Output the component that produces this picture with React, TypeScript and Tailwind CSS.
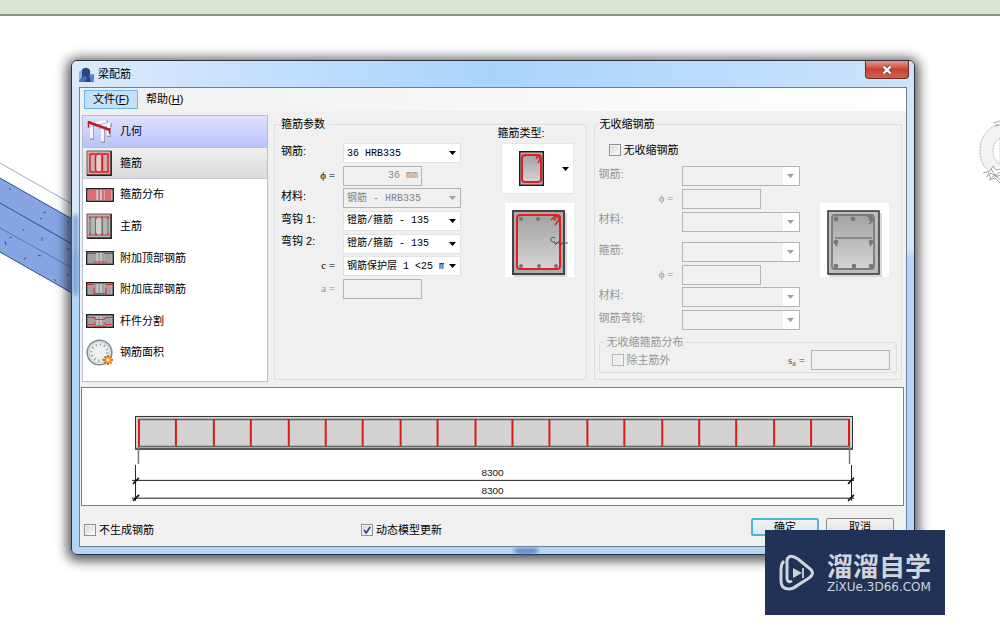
import type { ReactNode } from "react"

const bars = Array.from({ length: 20 }, (_, i) => 57 + Math.round(i * 37.4))

function SelectBox({ id, value, disabled, blank }: { id: string; value?: string; disabled?: boolean; blank?: boolean }) {
  return (
    <div className="grid w-[118px] items-center">
      <select
        id={id}
        disabled={disabled}
        className={`col-start-1 row-start-1 h-5 w-full appearance-none overflow-hidden border pr-4 pl-[3px] font-['Liberation_Mono','Noto_Sans_CJK_SC',monospace] text-[10px] text-clip whitespace-nowrap ${
          disabled ? "border-[#b4b4b4] bg-[#f0f0f0] text-[#838383] opacity-100" : "border-[#e3e3e3] bg-white text-black"
        }`}
      >
        <option>{value}</option>
      </select>
      <span
        className={`pointer-events-none col-start-1 row-start-1 mr-px flex h-[18px] w-4 items-center justify-center justify-self-end ${
          blank ? "bg-white" : ""
        }`}
      >
        <svg width="7" height="4" viewBox="0 0 7 4" className={disabled ? "text-[#a0a0a0]" : "text-black"}>
          <path d="M0 0h7L3.5 4z" fill="currentColor" />
        </svg>
      </span>
    </div>
  )
}

function TextBox({ id, value, disabled }: { id: string; value?: string; disabled?: boolean }) {
  return (
    <input
      id={id}
      type="text"
      defaultValue={value}
      disabled={disabled}
      className="h-5 w-[79px] border border-[#b4b4b4] bg-[#f0f0f0] px-[3px] text-right font-['Liberation_Mono','Noto_Sans_CJK_SC',monospace] text-[10px] text-[#8a8a8a]"
    />
  )
}

function CheckBox({ label, checked, disabled }: { label: string; checked?: boolean; disabled?: boolean }) {
  return (
    <label className={`flex items-center gap-[3px] ${disabled ? "text-[#969696]" : "text-black"}`}>
      <span className="grid">
        <input
          type="checkbox"
          defaultChecked={checked}
          disabled={disabled}
          className="peer col-start-1 row-start-1 h-3 w-3 appearance-none border border-[#8e8f8f] bg-linear-to-br from-[#cfd2d6] to-white shadow-[inset_0_0_0_1px_#f4f4f4] disabled:border-[#b5b5b5] disabled:bg-none"
        />
        <svg
          viewBox="0 0 12 12"
          className="pointer-events-none invisible col-start-1 row-start-1 h-3 w-3 peer-checked:visible"
        >
          <path d="M3 6l2.2 3L9.3 2.8" fill="none" stroke="#33499b" strokeWidth="1.8" />
        </svg>
      </span>
      {label}
    </label>
  )
}

function Row({ id, label, symbol, dim, children }: { id: string; label: string; symbol?: boolean; dim?: boolean; children: ReactNode }) {
  return (
    <div className="flex items-center">
      <label
        htmlFor={id}
        className={`flex-1 ${symbol ? "pr-2 pb-px text-right font-['Liberation_Serif','Noto_Sans_CJK_SC',serif]" : "pb-1"} ${
          dim ? "text-[#969696]" : "text-black"
        }`}
      >
        {label}
      </label>
      {children}
    </div>
  )
}

function GeometryIcon() {
  return (
    <svg width="28" height="26" viewBox="0 0 28 26">
      <g fill="none" strokeLinecap="square">
        <path d="M6 9v11M17 12v11M23 9v8M6 7l14-3M14 9l10-2" stroke="#9b9bab" strokeWidth="3.800" />
        <path d="M5.500 8v11M16.500 11v11M22.500 7v9M5 6.500l14-3M13 9l10-3" stroke="#f6f6f6" strokeWidth="3" />
        <path d="M2 4l22 8" stroke="#c51422" strokeWidth="2.600" strokeLinecap="butt" />
        <path d="M2.500 4v5M23.500 11v4" stroke="#c51422" strokeWidth="1.400" />
      </g>
    </svg>
  )
}

function SectionIcon({ main }: { main?: boolean }) {
  return (
    <svg width="26" height="26" viewBox="0 0 26 26">
      <rect x="1" y="1" width="24" height="24" fill={main ? "#b4b4b0" : "#cfaeab"} stroke="#6a5c5c" />
      <path d="M25.200 1v24.200H1" fill="none" stroke="#222" strokeWidth="1.400" />
      <g fill="none" stroke={main ? "#716f6d" : "#cf1b25"} strokeWidth={main ? "1" : "1.400"}>
        <path d="M5 4h4q1 1 1 3v12q0 2-1 3H5q-1-1-1-3V7q0-2 1-3z" />
        <path d="M10.500 4h5q1 1 1 3v12q0 2-1 3h-5q-1-1-1-3V7q0-2 1-3z" fill={main ? "#cfcfcb" : "#e3cfcc"} />
        <path d="M17 4h4q1 1 1 3v12q0 2-1 3h-4q-1-1-1-3V7q0-2 1-3z" />
      </g>
      <g fill="#ee3340">
        {[4, 10, 16, 22].map((x) => (
          <g key={x}>
            <circle cx={x} cy="4.500" r="1.300" />
            <circle cx={x} cy="21.500" r="1.300" />
          </g>
        ))}
      </g>
    </svg>
  )
}

function SpanIcon({ kind }: { kind: "spread" | "top" | "bottom" | "split" }) {
  const red = kind === "spread"
  return (
    <svg width="28" height="14" viewBox="0 0 28 14">
      <rect x="0.7" y="0.7" width="26.600" height="12.600" fill={red ? "#d9a7a7" : "#b3afaf"} stroke="#1d1818" strokeWidth="1.300" />
      <path
        d="M3 2v10M5 2v10M7 2v10M9 2v10M13 2v10M17 2v10M20 2v10M22 2v10M24 2v10"
        stroke={red ? "#dc3542" : "#969191"}
        strokeWidth="1"
      />
      <path d="M11.500 2v10M15 2v10" stroke="#c3caca" strokeWidth="1.500" />
      <g fill="none" stroke="#e22f3e" strokeWidth="1.200">
        {kind === "top" && <path d="M1.500 2.500H10M18 2.500h8.500M7 11h14" />}
        {kind === "bottom" && <path d="M1.500 2.500H8M20 2.500h6.500M7 11.500h14M8 11V6M20 11V6" />}
        {kind === "split" && <path d="M1.500 3.500H8l2 2h8l2-2h6.500M2 10.500h6l2-2M26 10.500h-6l-2-2M8 12h12" />}
      </g>
    </svg>
  )
}

function AreaIcon() {
  return (
    <svg width="28" height="28" viewBox="0 0 28 28">
      <circle cx="13.500" cy="13.500" r="12.300" fill="#eceef0" stroke="#858b90" strokeWidth="1.600" />
      <circle cx="13.500" cy="13.500" r="10.500" fill="none" stroke="#c9cdd0" />
      <circle cx="13.500" cy="13.500" r="8" fill="none" stroke="#8397ab" strokeWidth="2.200" strokeDasharray="1.200 3" />
      <path d="M22 16v10M17 21h10M18.500 17.500l7 7M25.500 17.500l-7 7" stroke="#e06a17" strokeWidth="2" />
      <circle cx="22" cy="21" r="3.300" fill="#f28a1c" />
      <circle cx="22" cy="21" r="1.800" fill="#fff3a8" />
    </svg>
  )
}

const items = [
  { label: "几何", icon: <GeometryIcon />, style: "bg-linear-to-b from-[#dfe0fb] to-[#b9c3fb] border-[#b9bddc]" },
  { label: "箍筋", icon: <SectionIcon />, style: "bg-linear-to-b from-[#efefef] to-[#dadada] border-[#c9c9d8]" },
  { label: "箍筋分布", icon: <SpanIcon kind="spread" />, style: "border-transparent" },
  { label: "主筋", icon: <SectionIcon main />, style: "border-transparent" },
  { label: "附加顶部钢筋", icon: <SpanIcon kind="top" />, style: "border-transparent" },
  { label: "附加底部钢筋", icon: <SpanIcon kind="bottom" />, style: "border-transparent" },
  { label: "杆件分割", icon: <SpanIcon kind="split" />, style: "border-transparent" },
  { label: "钢筋面积", icon: <AreaIcon />, style: "border-transparent" },
]

function StirrupPreview() {
  return (
    <svg width="69" height="74" viewBox="0 0 69 74" className="bg-white">
      <defs>
        <linearGradient id="concrete" x1="0" y1="0" x2="0" y2="1">
          <stop offset="0" stopColor="#a3a3a3" />
          <stop offset="1" stopColor="#d4d4d4" />
        </linearGradient>
      </defs>
      <rect x="9" y="10" width="53" height="64" fill="#000" opacity="0.15" />
      <rect x="8" y="8" width="51" height="63" fill="#aeaaae" stroke="#49424a" strokeWidth="2" />
      <rect x="12" y="12" width="43" height="54" rx="3" fill="url(#concrete)" stroke="#e0201b" strokeWidth="2" />
      <g fill="#777">
        <circle cx="16" cy="16" r="2" />
        <circle cx="33" cy="16" r="2" />
        <circle cx="50" cy="16" r="2" />
        <circle cx="16" cy="63" r="2" />
        <circle cx="34" cy="63" r="2" />
        <circle cx="51" cy="63" r="2" />
      </g>
      <path d="M46 17l4-4q4 0 4 4l-4 5" fill="none" stroke="#e0201b" strokeWidth="1.500" />
      <path d="M50 35q-4-2-4 1.500t4 2M49 40h14M50 42l4-4M56 42l4-4" fill="none" stroke="#555" />
    </svg>
  )
}

function ShrinkagePreview() {
  return (
    <svg width="69" height="74" viewBox="0 0 69 74" className="bg-white">
      <rect x="9" y="10" width="53" height="64" fill="#000" opacity="0.15" />
      <rect x="8" y="8" width="51" height="63" fill="#bdbdbd" stroke="#333" strokeWidth="1.500" />
      <rect x="12" y="12" width="42" height="54" rx="3" fill="url(#concrete)" stroke="#7b7b7b" strokeWidth="1.800" />
      <path d="M15 35h37" stroke="#777" strokeWidth="1.500" />
      <path d="M14 38l3 5M53 38l-3 5M47 14l4-1 2 4-4 4" fill="none" stroke="#777" strokeWidth="1.500" />
      <g fill="#777">
        <circle cx="16" cy="16" r="2.300" />
        <circle cx="33" cy="16" r="2.300" />
        <circle cx="51" cy="16" r="2.300" />
        <circle cx="16" cy="39" r="2.300" />
        <circle cx="51" cy="39" r="2.300" />
        <circle cx="16" cy="63" r="2.300" />
        <circle cx="34" cy="63" r="2.300" />
        <circle cx="51" cy="63" r="2.300" />
      </g>
    </svg>
  )
}

function StirrupParameters() {
  return (
    <fieldset className="min-w-0 flex-1 rounded-xs border border-[#dcdfe2] px-[6px]">
      <legend className="h-3 pr-1 leading-3">箍筋参数</legend>
      <div className="flex justify-between">
        <div className="mt-3 grid h-[158px] w-[180px] grid-rows-7">
          <Row id="bar" label="钢筋:">
            <SelectBox id="bar" value="36 HRB335" />
          </Row>
          <Row id="phi" label="ϕ =" symbol>
            <div className="w-[118px]">
              <TextBox id="phi" value="36 mm" disabled />
            </div>
          </Row>
          <Row id="material" label="材料:">
            <SelectBox id="material" value="钢筋 - HRB335" disabled />
          </Row>
          <Row id="hook1" label="弯钩 1:">
            <SelectBox id="hook1" value="镫筋/箍筋 - 135" />
          </Row>
          <Row id="hook2" label="弯钩 2:">
            <SelectBox id="hook2" value="镫筋/箍筋 - 135" />
          </Row>
          <Row id="cover" label="c =" symbol>
            <SelectBox id="cover" value="钢筋保护层 1 <25 mm>" />
          </Row>
          <Row id="offset" label="a =" symbol dim>
            <div className="w-[118px]">
              <TextBox id="offset" disabled />
            </div>
          </Row>
        </div>
        <div className="-mt-[3px] flex flex-col items-end pr-[6px]">
          <div className="mb-1 w-[76px] leading-3">箍筋类型:</div>
          <button
            aria-label="箍筋类型"
            className="mb-[9px] flex h-[51px] w-[73px] items-center gap-[18px] border border-[#e6e6e6] bg-white pl-[17px]"
          >
            <svg width="25" height="35" viewBox="0 0 25 35">
              <rect x="0.7" y="0.7" width="23.600" height="33.600" fill="#b3adad" stroke="#241a1a" strokeWidth="1.400" />
              <rect x="3" y="4" width="19" height="27" rx="3" fill="url(#concrete)" stroke="#e0201b" strokeWidth="2" />
              <path d="M17 8l2-3q3 1 2 3l-2 4" fill="none" stroke="#e0201b" strokeWidth="1.500" />
            </svg>
            <svg width="7" height="4" viewBox="0 0 7 4">
              <path d="M0 0h7L3.500 4z" />
            </svg>
          </button>
          <StirrupPreview />
        </div>
      </div>
    </fieldset>
  )
}

function ShrinkageReinforcement() {
  return (
    <fieldset className="min-w-0 flex-1 rounded-xs border border-[#dcdfe2] px-1">
      <legend className="h-3 px-px leading-3">无收缩钢筋</legend>
      <div className="flex justify-between">
        <div className="w-[201px]">
          <div className="mt-3 mb-[7px] flex h-4 items-center pl-[10px]">
            <CheckBox label="无收缩钢筋" />
          </div>
          <div className="grid h-[68px] grid-rows-3">
            <Row id="s-bar" label="钢筋:" dim>
              <SelectBox id="s-bar" disabled blank />
            </Row>
            <Row id="s-phi" label="ϕ =" symbol dim>
              <div className="w-[118px]">
                <TextBox id="s-phi" disabled />
              </div>
            </Row>
            <Row id="s-material" label="材料:" dim>
              <SelectBox id="s-material" disabled blank />
            </Row>
          </div>
          <div className="mt-2 grid h-[90px] grid-rows-4">
            <Row id="s-stirrup" label="箍筋:" dim>
              <SelectBox id="s-stirrup" disabled blank />
            </Row>
            <Row id="s-stirrup-phi" label="ϕ =" symbol dim>
              <div className="w-[118px]">
                <TextBox id="s-stirrup-phi" disabled />
              </div>
            </Row>
            <Row id="s-stirrup-material" label="材料:" dim>
              <SelectBox id="s-stirrup-material" disabled blank />
            </Row>
            <Row id="s-hook" label="钢筋弯钩:" dim>
              <SelectBox id="s-hook" disabled blank />
            </Row>
          </div>
        </div>
        <div className="mt-[73px] pr-2">
          <ShrinkagePreview />
        </div>
      </div>
      <fieldset className="mt-[5px] rounded-xs border border-[#dcdfe2] px-[6px]">
        <legend className="h-3 px-px leading-3 text-[#969696]">无收缩箍筋分布</legend>
        <div className="flex h-6 items-center justify-between pl-[6px]">
          <CheckBox label="除主筋外" disabled />
          <div className="flex items-center gap-[6px]">
            <label htmlFor="spacing" className="font-['Liberation_Serif',serif] leading-3 text-[#555]">
              s<sub>a</sub> =
            </label>
            <TextBox id="spacing" disabled />
          </div>
        </div>
      </fieldset>
    </fieldset>
  )
}

function BeamDrawing() {
  return (
    <svg viewBox="0 0 822 117" className="block w-full" role="img" aria-label="8300">
      <rect x="53.500" y="28.500" width="718" height="32" fill="#d2d2d2" stroke="#333" />
      <path d="M53 61h719" stroke="#555" strokeWidth="2" />
      <path d="M56 31.500h713M56 58.500h713" stroke="#666" strokeWidth="1.500" />
      {bars.map((x) => (
        <path key={x} d={`M${x} 31v27`} stroke="#d91b14" strokeWidth="2" />
      ))}
      <path d="M56.500 58v18M768.500 58v18" stroke="#777" strokeWidth="1.500" />
      <path d="M53.500 77v36M770.500 77v36M50 92.500h723" stroke="#222" fill="none" />
      <path d="M50 110.500h723" stroke="#666" strokeWidth="1.500" />
      <path d="M51 96l6-6M51 113l6-6M767 96l6-6M767 113l6-6" stroke="#111" strokeWidth="1.500" />
      <g fontSize="10" fontFamily="Liberation Sans, sans-serif" textAnchor="middle" fill="#111">
        <text x="411" y="88">
          8300
        </text>
        <text x="411" y="106">
          8300
        </text>
      </g>
    </svg>
  )
}

function ModelBackground() {
  return (
    <>
      <svg width="72" height="140" viewBox="0 0 72 140" className="absolute top-[160px] left-0">
        <path d="M0 18l72 41v74L0 92z" fill="#86a5e2" />
        <path d="M0 3l72 41" stroke="#91a8dc" />
        <path d="M0 18l72 41M0 43l72 41M0 92l72 41" stroke="#2c4b9e" />
        <path d="M0 68l72 40" stroke="#5674bb" />
        <path
          d="M9 28l2 2M43 53l3-1M40 59l2-1M23 69l1 2M42 77v4M5 81l1 4M38 95l3 1M24 100l2-3M54 119l2 2M67 62l2 1M67 88l3 2M9 78l3-1M67 114l2 2"
          stroke="#3555a8"
        />
      </svg>
      <svg width="22" height="68" viewBox="0 0 22 68" className="absolute top-[118px] right-0">
        <path d="M22 5Q2 14 2 33q0 13 8 19l12-3V19q-6 6-6 14 0 8 6 13" fill="#f3f3f3" stroke="none" />
        <path d="M20 6Q2 14 2 33q0 13 8 19" fill="none" stroke="#aaa" strokeDasharray="2 1" />
        <path d="M22 20q-7 5-7 13t7 13V20z" fill="#fff" stroke="#bbb" strokeDasharray="2 1" />
        <path
          d="M15 5l7-2M17 8l5-1M5 55l7-2 3-5 3 4 4-1M8 59l5-4 4 3 5-4M10 54l3 7 4-5 5 6M13 51l5 8 4-2M11 62l6-2 5 5"
          fill="none"
          stroke="#a6a6a6"
        />
      </svg>
    </>
  )
}

export default function App() {
  return (
    <div className="relative min-h-screen overflow-hidden bg-white font-['Liberation_Sans','Noto_Sans_CJK_SC',sans-serif] text-[11px] text-black">
      <div className="h-4 border-b-2 border-[#8d918b] bg-[#dae4d3]" />
      <ModelBackground />

      <main className="relative mt-11 mr-[85px] ml-[71px] rounded-md border border-[#28333f] bg-linear-to-b from-[#d5e8fb] from-38% to-[#b4d6f6] to-40% px-[7px] pb-[7px] shadow-[0_2px_12px_4px_rgba(0,0,0,0.65)]">
        <div className="pointer-events-none absolute top-[154px] left-px h-20 w-[5px] bg-[#7399d6] blur-[2px]" />
        <div className="pointer-events-none absolute bottom-px left-[442px] h-1 w-6 rounded-b-full bg-[#3c66b4] blur-[2px]" />
        <header className="-mx-[7px] flex h-[26px] items-center gap-1 rounded-t-md bg-linear-to-r from-[#dceafb] via-[#a9d3fd] to-[#cde3fb] pl-[7px]">
          <svg width="15" height="15" viewBox="0 0 15 15">
            <path d="M0 5l4-3v13H0z" fill="#8eb0de" />
            <path d="M3 3q2-3 5-2 4 1 3 5l1 3 3 6H0l3-5z" fill="#2a4684" />
            <path d="M10 8l5-1v8h-3z" fill="#5b82c4" />
            <path d="M0 14l5-5 3 1-2 5H0z" fill="#4a70b5" />
          </svg>
          <h1 className="flex-1">梁配筋</h1>
          <button
            aria-label="关闭"
            className="mr-[5px] flex h-[18px] w-11 items-center justify-center self-start rounded-b-sm border border-t-0 border-[#6b2a25] bg-linear-to-b from-[#df9a8c] via-[#c9432f] via-50% to-[#cf6250]"
          >
            <svg width="12" height="10" viewBox="0 0 12 10">
              <path d="M2.500 1.500l7 7M9.500 1.500l-7 7" stroke="#6b4a4a" strokeWidth="4" />
              <path d="M2.500 1.500l7 7M9.500 1.500l-7 7" stroke="#fff" strokeWidth="2.400" />
            </svg>
          </button>
        </header>

        <div className="relative border border-[#6d8096] bg-[#f0f0f0]">
          <nav className="flex h-[23px] items-center bg-linear-to-r from-[#f0f0f0] to-white pl-1">
            <button className="mr-px h-[19px] border border-[#69b5ee] bg-[#c5e0f7] px-2">
              文件(<u>F</u>)
            </button>
            <button className="h-[19px] px-[7px]">
              帮助(<u>H</u>)
            </button>
          </nav>

          <div className="flex gap-[6px] pr-1 pl-[2px]">
            <ul className="mt-1 flex h-[267px] w-[186px] flex-col border border-[#b5bfdc] bg-white pb-3">
              {items.map((item) => (
                <li key={item.label} className="flex flex-1">
                  <button className={`flex h-full w-full items-center border-b pl-[3px] ${item.style}`}>
                    <span className="flex w-[34px] items-center">{item.icon}</span>
                    {item.label}
                  </button>
                </li>
              ))}
            </ul>
            <div className="flex h-[269px] min-w-0 flex-1 items-stretch gap-[7px] pt-[7px]">
              <StirrupParameters />
              <ShrinkageReinforcement />
            </div>
          </div>

          <div className="mt-[5px] mr-[2px] ml-px border border-[#7f7f7f] bg-white">
            <BeamDrawing />
          </div>

          <footer className="flex h-10 items-start pt-3 pr-3 pl-1">
            <div className="flex w-[277px] pt-1">
              <CheckBox label="不生成钢筋" />
            </div>
            <div className="flex-1 pt-1">
              <CheckBox label="动态模型更新" checked />
            </div>
            <div className="flex gap-[7px]">
              <button className="h-[18px] w-[68px] rounded-xs border-2 border-[#4fb4dc] bg-linear-to-b from-[#f3f3f3] to-[#dbe6ee] leading-3">
                确定
              </button>
              <button className="h-[18px] w-[68px] rounded-xs border border-[#8a8a8a] bg-linear-to-b from-[#f4f4f4] to-[#e2e2e2] leading-3">
                取消
              </button>
            </div>
          </footer>
        </div>
      </main>

      <aside className="absolute top-[530px] right-[55px] flex h-[85px] w-[180px] items-center gap-3 bg-[#223156] pl-[14px] text-[#cfd3dc]">
        <svg width="36" height="38" viewBox="0 0 36 38" fill="none" stroke="currentColor">
          <path d="M5 7q-3 3-3 8v12q0 8 8 8 4 0 9-4l11-7q7-5 0-10L19 5q-9-6-11 1v19q1 4 5 2" strokeWidth="3" />
          <path d="M14 14l9 5-9 5z" fill="currentColor" stroke="none" />
          <path d="M24 14v10" strokeWidth="1.800" />
        </svg>
        <div>
          <div className="text-[26px] leading-7 font-bold">溜溜自学</div>
          <div className="font-['DejaVu_Sans',sans-serif] text-[12px] leading-3">ZiXUe.3D66.COM</div>
        </div>
      </aside>
    </div>
  )
}
